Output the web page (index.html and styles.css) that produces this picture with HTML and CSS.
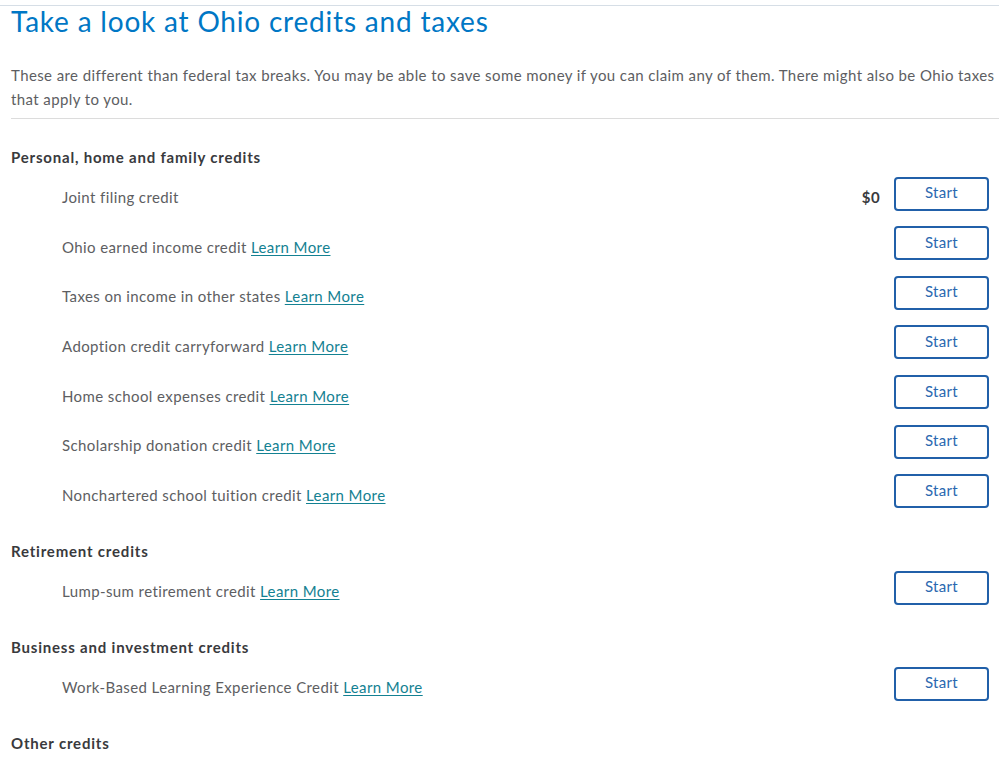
FILE: index.html
```html
<!DOCTYPE html>
<html lang="en">
<head>
<meta charset="utf-8">
<title>Ohio credits and taxes</title>
<link rel="stylesheet" href="styles.css">
</head>
<body>
<div class="page">
  <header class="intro">
    <h1 class="title">Take a look at Ohio credits and taxes</h1>
    <p class="lead">These are different than federal tax breaks. You may be able to save some money if you can claim any of them. There might also be Ohio taxes that apply to you.</p>
  </header>

  <section class="group">
    <h2 class="group-title">Personal, home and family credits</h2>
    <div class="row">
      <span class="label">Joint filing credit</span>
      <span class="amount">$0</span>
      <button class="btn">Start</button>
    </div>
    <div class="row">
      <span class="label">Ohio earned income credit <a class="more" href="#">Learn More</a></span>
      <button class="btn">Start</button>
    </div>
    <div class="row">
      <span class="label">Taxes on income in other states <a class="more" href="#">Learn More</a></span>
      <button class="btn">Start</button>
    </div>
    <div class="row">
      <span class="label">Adoption credit carryforward <a class="more" href="#">Learn More</a></span>
      <button class="btn">Start</button>
    </div>
    <div class="row">
      <span class="label">Home school expenses credit <a class="more" href="#">Learn More</a></span>
      <button class="btn">Start</button>
    </div>
    <div class="row">
      <span class="label">Scholarship donation credit <a class="more" href="#">Learn More</a></span>
      <button class="btn">Start</button>
    </div>
    <div class="row">
      <span class="label">Nonchartered school tuition credit <a class="more" href="#">Learn More</a></span>
      <button class="btn">Start</button>
    </div>
  </section>

  <section class="group">
    <h2 class="group-title">Retirement credits</h2>
    <div class="row">
      <span class="label">Lump-sum retirement credit <a class="more" href="#">Learn More</a></span>
      <button class="btn">Start</button>
    </div>
  </section>

  <section class="group">
    <h2 class="group-title">Business and investment credits</h2>
    <div class="row">
      <span class="label">Work-Based Learning Experience Credit <a class="more" href="#">Learn More</a></span>
      <button class="btn">Start</button>
    </div>
  </section>

  <section class="group">
    <h2 class="group-title">Other credits</h2>
  </section>
</div>
</body>
</html>
```

FILE: styles.css
```css
html, body {
  margin: 0;
  padding: 0;
  background: #ffffff;
}

body {
  font-family: Lato, "Open Sans", "Liberation Sans", sans-serif;
  font-size: 15px;
  letter-spacing: 0.4px;
  color: #5d5e62;
}

.page {
  margin-top: 5px;
  border-top: 1px solid #d6dee6;
  padding: 0 0 0 11px;
}

.intro {
  border-bottom: 1px solid #dcdcdc;
  padding-bottom: 7px;
}

.title {
  margin: 0;
  font-size: 28px;
  line-height: 30px;
  font-weight: 400;
  letter-spacing: 0.8px;
  color: #0077c5;
}

.lead {
  margin: 27px 0 0;
  font-size: 15px;
  line-height: 24px;
  color: #5d5e62;
}

.group {
  margin-top: 25px;
  padding-right: 10px;
}

.intro + .group {
  margin-top: 28px;
}

.group-title {
  margin: 0 0 1.5px;
  font-size: 15px;
  line-height: 20px;
  font-weight: 700;
  letter-spacing: 0.8px;
  color: #393a3d;
}

.row {
  display: flex;
  align-items: flex-start;
  padding: 8px 0 7.67px;
}

.label {
  flex: 1;
  padding-left: 51px;
  margin-top: 10.5px;
  line-height: 20px;
  color: #5d5e62;
}

.more {
  color: #138192;
  text-decoration: underline;
  text-underline-offset: 2px;
}

.amount {
  margin-top: 10.5px;
  margin-right: 14px;
  line-height: 20px;
  font-weight: 700;
  color: #393a3d;
}

.btn {
  box-sizing: border-box;
  width: 95px;
  height: 34px;
  padding: 0 0 3px;
  border: 2px solid #2160a9;
  border-radius: 4px;
  background: #ffffff;
  font-family: inherit;
  font-size: 15px;
  letter-spacing: 0.3px;
  color: #2a68b0;
  cursor: pointer;
}
```
